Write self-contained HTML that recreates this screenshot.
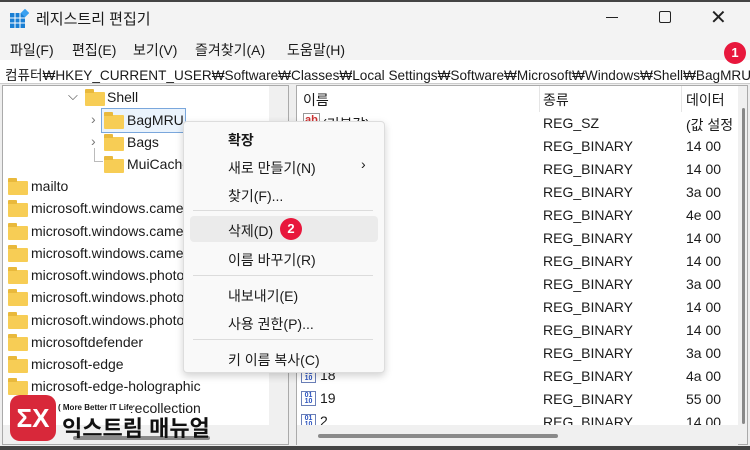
<!DOCTYPE html>
<html><head><meta charset="utf-8"><style>
*{margin:0;padding:0;box-sizing:border-box}
body{width:750px;height:450px;overflow:hidden;background:#fff;font-family:"Liberation Sans","Noto Sans CJK KR",sans-serif;font-size:14px;color:#1a1a1a;position:relative}
.a{position:absolute;white-space:nowrap}
.fold{position:absolute;width:20px;height:14px;background:#f7cd55;border-radius:1px}
.fold:before{content:"";position:absolute;left:0;top:-3px;width:9px;height:4px;background:#e9b93c;border-radius:1px 1px 0 0}
.bin{position:absolute;width:15px;height:15px;border:1px solid #6a7fb8;background:#fff;font-size:7px;line-height:6px;color:#2a52be;font-weight:bold;text-align:center;padding-top:1px}
.sep{position:absolute;left:10px;right:10px;height:1px;background:#dcdcdc}
.badge{position:absolute;width:22px;height:22px;border-radius:50%;background:#e8173c;color:#fff;font-size:13px;font-weight:bold;text-align:center;line-height:22px}
</style></head><body>
<div class="a" style="left:0;top:0;width:750px;height:2px;background:#444"></div>
<div class="a" style="left:0;top:2px;width:750px;height:34px;background:#f3f3f3"></div>
<svg class="a" style="left:9px;top:9px" width="20" height="20" viewBox="0 0 20 20"><rect x="1" y="4" width="15" height="15" fill="#1a7fd4"/><g stroke="#fff" stroke-width="1"><path d="M6 4v15M11 4v15M1 9h15M1 14h15"/></g><rect x="13" y="1" width="6" height="6" fill="#3aa0f0" transform="rotate(45 16 4)"/></svg>
<div class="a" style="left:36px;top:8px;font-size:15px">레지스트리 편집기</div>
<div class="a" style="left:606px;top:17px;width:12px;height:1px;background:#222"></div>
<div class="a" style="left:659px;top:11px;width:12px;height:12px;border:1.3px solid #222;border-radius:2px"></div>
<div class="a" style="left:710px;top:5px;font-size:20px;color:#222">✕</div>
<div class="a" style="left:0;top:36px;width:750px;height:24px;background:#f3f3f3"></div>
<div class="a" style="left:10px;top:40px">파일(F)</div>
<div class="a" style="left:72px;top:40px">편집(E)</div>
<div class="a" style="left:133px;top:40px">보기(V)</div>
<div class="a" style="left:195px;top:40px">즐겨찾기(A)</div>
<div class="a" style="left:287px;top:40px">도움말(H)</div>
<div class="a" style="left:0;top:60px;width:750px;height:24px;background:#fff;border-bottom:1px solid #ccc"></div>
<div class="a" style="left:5px;top:64px;font-size:13.6px">컴퓨터₩HKEY_CURRENT_USER₩Software₩Classes₩Local Settings₩Software₩Microsoft₩Windows₩Shell₩BagMRU</div>
<div class="badge" style="left:724px;top:42px">1</div>
<!-- left pane -->
<div class="a" style="left:0;top:84px;width:750px;height:366px;background:#eee"></div>
<div class="a" style="left:2px;top:85px;width:287px;height:360px;background:#f0f0f0;border:1px solid #aaa"></div>
<div class="a" style="left:3px;top:86px;width:266px;height:339px;background:#fff;overflow:hidden">
<div class="a" style="left:65px;top:2px;font-size:13px;color:#444">⌵</div>
<div class="fold" style="left:82px;top:6px"></div><div class="a" style="left:104px;top:3px">Shell</div>
<div class="a" style="left:98px;top:22px;width:85px;height:25px;border:1px solid #7aa7dc;background:#eaf3fc"></div>
<div class="a" style="left:88px;top:25px;color:#777">›</div>
<div class="fold" style="left:101px;top:29px"></div><div class="a" style="left:124px;top:26px">BagMRU</div>
<div class="a" style="left:88px;top:47px;color:#777">›</div>
<div class="fold" style="left:101px;top:51px"></div><div class="a" style="left:124px;top:48px">Bags</div>
<div class="a" style="left:91px;top:62px;width:9px;height:14px;border-left:1px solid #bbb;border-bottom:1px solid #bbb"></div>
<div class="fold" style="left:101px;top:73px"></div><div class="a" style="left:124px;top:70px">MuiCache</div>
<div class="fold" style="left:5px;top:95px"></div><div class="a" style="left:28px;top:92px">mailto</div>
<div class="fold" style="left:5px;top:117px"></div><div class="a" style="left:28px;top:114px">microsoft.windows.camera</div>
<div class="fold" style="left:5px;top:140px"></div><div class="a" style="left:28px;top:137px">microsoft.windows.camera</div>
<div class="fold" style="left:5px;top:162px"></div><div class="a" style="left:28px;top:159px">microsoft.windows.camera</div>
<div class="fold" style="left:5px;top:184px"></div><div class="a" style="left:28px;top:181px">microsoft.windows.photos</div>
<div class="fold" style="left:5px;top:206px"></div><div class="a" style="left:28px;top:203px">microsoft.windows.photos</div>
<div class="fold" style="left:5px;top:229px"></div><div class="a" style="left:28px;top:226px">microsoft.windows.photos</div>
<div class="fold" style="left:5px;top:251px"></div><div class="a" style="left:28px;top:248px">microsoftdefender</div>
<div class="fold" style="left:5px;top:273px"></div><div class="a" style="left:28px;top:270px">microsoft-edge</div>
<div class="fold" style="left:5px;top:295px"></div><div class="a" style="left:28px;top:292px">microsoft-edge-holographic</div>
<div class="a" style="left:127px;top:314px">recollection</div>
</div>
<div class="a" style="left:73px;top:436px;width:137px;height:4px;background:#8a8a8a;border-radius:2px"></div>
<!-- watermark -->
<div class="a" style="left:10px;top:395px;width:46px;height:46px;background:#d8283a;border-radius:10px;color:#fff;font-size:26px;font-weight:bold;text-align:center;line-height:46px">ΣX</div>
<div class="a" style="left:58px;top:403px;font-size:8px;font-weight:bold;background:#fff">( More Better IT Life</div>
<div class="a" style="left:62px;top:411px;font-size:22px;font-weight:bold;color:#111">익스트림 매뉴얼</div>
<!-- right pane -->
<div class="a" style="left:296px;top:85px;width:452px;height:360px;background:#f0f0f0;border:1px solid #aaa"></div>
<div class="a" style="left:297px;top:86px;width:441px;height:339px;background:#fff"></div>
<div class="a" style="left:539px;top:86px;width:1px;height:26px;background:#e5e5e5"></div>
<div class="a" style="left:681px;top:86px;width:1px;height:26px;background:#e5e5e5"></div>
<div class="a" style="left:742px;top:108px;width:3px;height:316px;background:#888;border-radius:2px"></div>
<div class="a" style="left:303px;top:90px">이름</div>
<div class="a" style="left:543px;top:90px">종류</div>
<div class="a" style="left:686px;top:90px">데이터</div>
<div class="a" style="left:303px;top:113px;font-size:11px;color:#c33;font-weight:bold;border:1px solid #999;padding:0 1px">ab</div><div class="a" style="left:322px;top:114px">(기본값)</div>
<div class="a" style="left:543px;top:115px">REG_SZ</div><div class="a" style="left:686px;top:115px">(값 설정</div>
<div class="a" style="left:543px;top:138px">REG_BINARY</div><div class="a" style="left:686px;top:138px">14 00</div>
<div class="a" style="left:543px;top:161px">REG_BINARY</div><div class="a" style="left:686px;top:161px">14 00</div>
<div class="a" style="left:543px;top:184px">REG_BINARY</div><div class="a" style="left:686px;top:184px">3a 00</div>
<div class="a" style="left:543px;top:207px">REG_BINARY</div><div class="a" style="left:686px;top:207px">4e 00</div>
<div class="a" style="left:543px;top:230px">REG_BINARY</div><div class="a" style="left:686px;top:230px">14 00</div>
<div class="a" style="left:543px;top:253px">REG_BINARY</div><div class="a" style="left:686px;top:253px">14 00</div>
<div class="a" style="left:543px;top:276px">REG_BINARY</div><div class="a" style="left:686px;top:276px">3a 00</div>
<div class="a" style="left:543px;top:299px">REG_BINARY</div><div class="a" style="left:686px;top:299px">14 00</div>
<div class="a" style="left:543px;top:322px">REG_BINARY</div><div class="a" style="left:686px;top:322px">14 00</div>
<div class="a" style="left:543px;top:345px">REG_BINARY</div><div class="a" style="left:686px;top:345px">3a 00</div>
<div class="bin" style="left:301px;top:368px">01<br>10</div><div class="a" style="left:320px;top:367px">18</div>
<div class="a" style="left:543px;top:368px">REG_BINARY</div><div class="a" style="left:686px;top:368px">4a 00</div>
<div class="bin" style="left:301px;top:391px">01<br>10</div><div class="a" style="left:320px;top:390px">19</div>
<div class="a" style="left:543px;top:391px">REG_BINARY</div><div class="a" style="left:686px;top:391px">55 00</div>
<div class="bin" style="left:301px;top:414px">01<br>10</div><div class="a" style="left:320px;top:413px">2</div>
<div class="a" style="left:543px;top:414px">REG_BINARY</div><div class="a" style="left:686px;top:414px">14 00</div>
<div class="a" style="left:297px;top:425px;width:441px;height:20px;background:#f0f0f0"></div>
<div class="a" style="left:318px;top:434px;width:240px;height:4px;background:#8a8a8a;border-radius:2px"></div>
<div class="a" style="left:0;top:446px;width:750px;height:4px;background:#444"></div>
<!-- context menu -->
<div class="a" style="left:183px;top:121px;width:202px;height:252px;background:#f9f9f9;border:1px solid #ddd;border-radius:4px;box-shadow:0 3px 8px rgba(0,0,0,.18)"></div>
<div class="a" style="left:190px;top:216px;width:188px;height:26px;background:#ebebeb;border-radius:4px"></div>
<div class="a" style="left:228px;top:130px;font-weight:bold">확장</div>
<div class="a" style="left:228px;top:158px">새로 만들기(N)</div><div class="a" style="left:361px;top:156px;font-size:14px">›</div>
<div class="a" style="left:228px;top:186px">찾기(F)...</div>
<div class="sep" style="left:193px;width:180px;top:210px"></div>
<div class="a" style="left:228px;top:221px">삭제(D)</div>
<div class="badge" style="left:280px;top:218px">2</div>
<div class="a" style="left:228px;top:250px">이름 바꾸기(R)</div>
<div class="sep" style="left:193px;width:180px;top:275px"></div>
<div class="a" style="left:228px;top:286px">내보내기(E)</div>
<div class="a" style="left:228px;top:314px">사용 권한(P)...</div>
<div class="sep" style="left:193px;width:180px;top:339px"></div>
<div class="a" style="left:228px;top:350px">키 이름 복사(C)</div>
</body></html>
